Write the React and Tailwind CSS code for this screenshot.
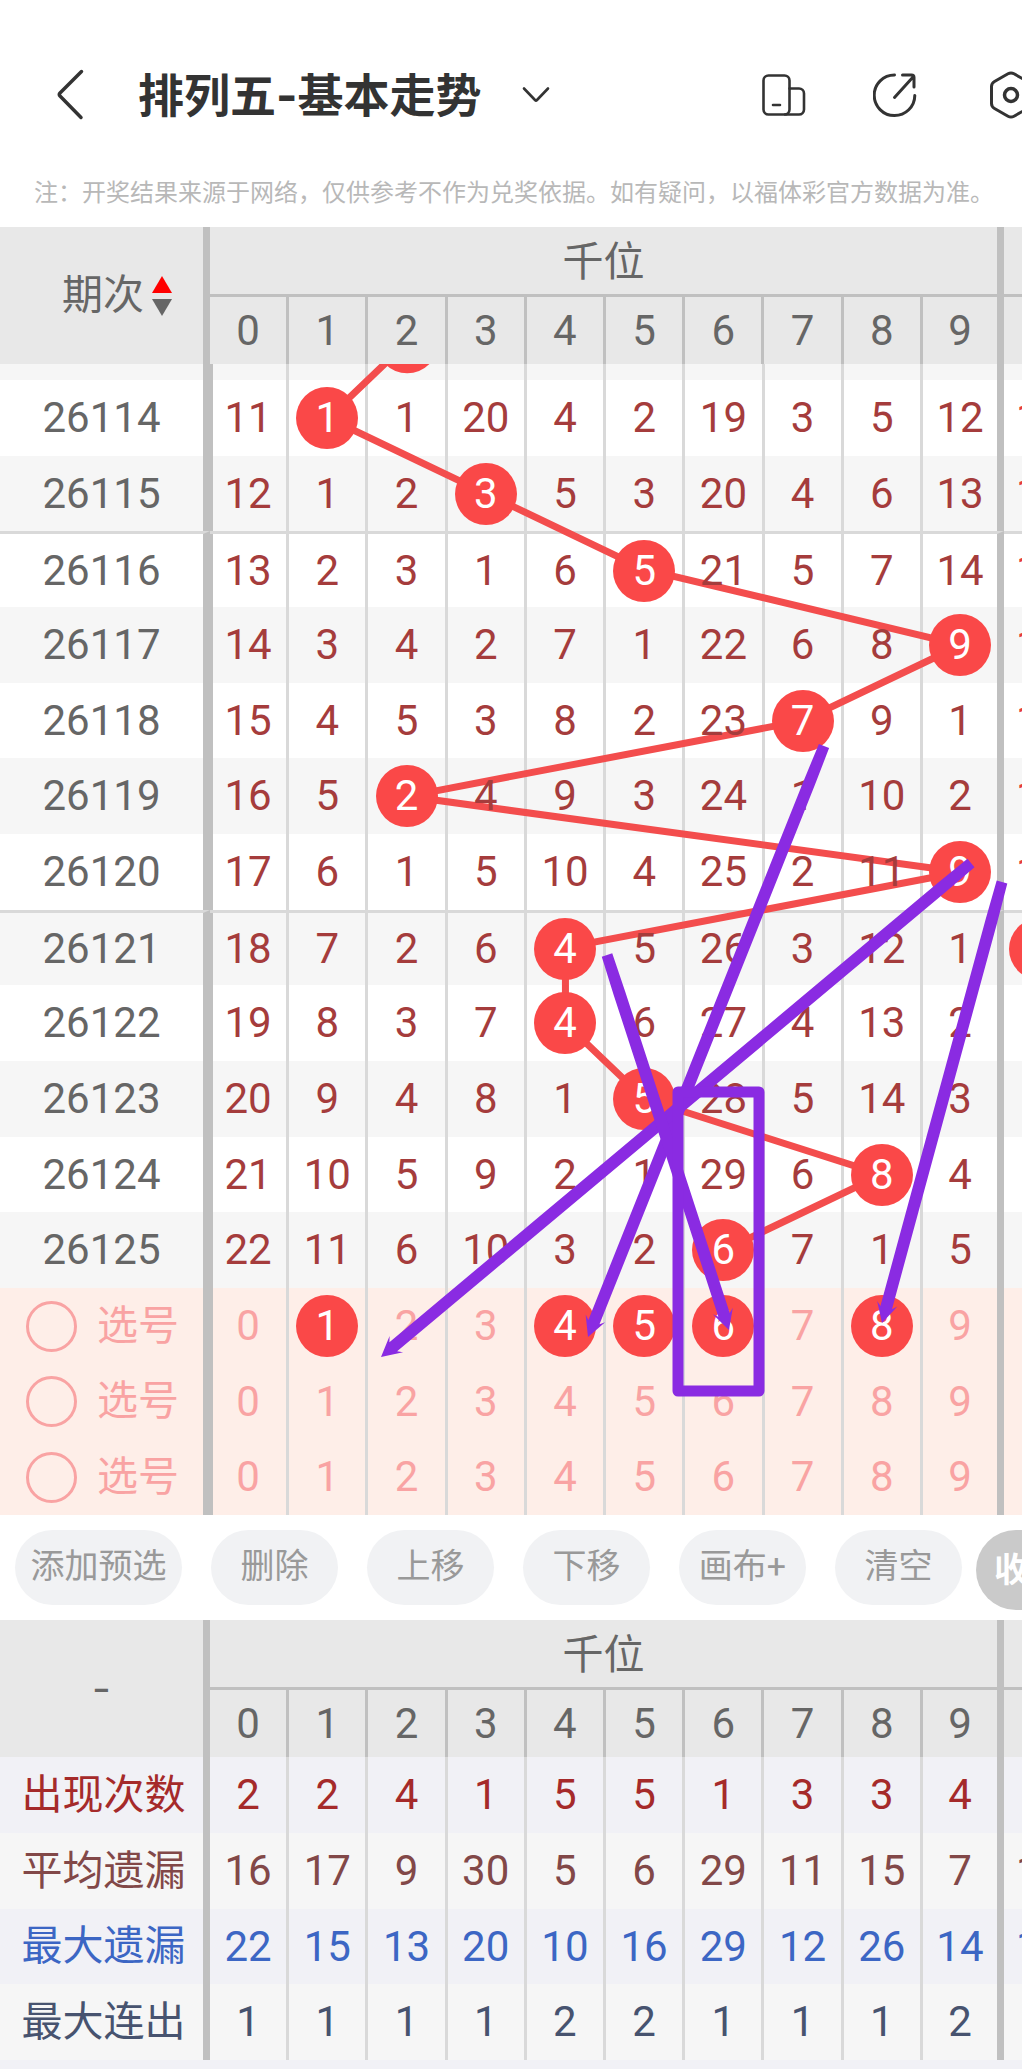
import { useState } from 'react';

const DIGITS = [0, 1, 2, 3, 4, 5, 6, 7, 8, 9];

const DRAWS = [
  { issue: '26114', hit: 1, cells: [11, 1, 1, 20, 4, 2, 19, 3, 5, 12], next: '1' },
  { issue: '26115', hit: 3, cells: [12, 1, 2, 3, 5, 3, 20, 4, 6, 13], next: '1' },
  { issue: '26116', hit: 5, cells: [13, 2, 3, 1, 6, 5, 21, 5, 7, 14], next: '1', divider: true },
  { issue: '26117', hit: 9, cells: [14, 3, 4, 2, 7, 1, 22, 6, 8, 9], next: '1' },
  { issue: '26118', hit: 7, cells: [15, 4, 5, 3, 8, 2, 23, 7, 9, 1], next: '1' },
  { issue: '26119', hit: 2, cells: [16, 5, 2, 4, 9, 3, 24, 1, 10, 2], next: '1' },
  { issue: '26120', hit: 9, cells: [17, 6, 1, 5, 10, 4, 25, 2, 11, 9], next: '1' },
  { issue: '26121', hit: 4, cells: [18, 7, 2, 6, 4, 5, 26, 3, 12, 1], nextHit: true, divider: true },
  { issue: '26122', hit: 4, cells: [19, 8, 3, 7, 4, 6, 27, 4, 13, 2] },
  { issue: '26123', hit: 5, cells: [20, 9, 4, 8, 1, 5, 28, 5, 14, 3] },
  { issue: '26124', hit: 8, cells: [21, 10, 5, 9, 2, 1, 29, 6, 8, 4] },
  { issue: '26125', hit: 6, cells: [22, 11, 6, 10, 3, 2, 6, 7, 1, 5] },
];

const STATS = [
  { label: '出现次数', cells: [2, 2, 4, 1, 5, 5, 1, 3, 3, 4], color: 'text-[#a52a2a]', bg: 'bg-[#f1f1f6]' },
  { label: '平均遗漏', cells: [16, 17, 9, 30, 5, 6, 29, 11, 15, 7], color: 'text-[#824848]', bg: 'bg-[#f6f6f6]', next: '1' },
  { label: '最大遗漏', cells: [22, 15, 13, 20, 10, 16, 29, 12, 26, 14], color: 'text-[#3c66c4]', bg: 'bg-[#f1f1f6]', next: '1' },
  { label: '最大连出', cells: [1, 1, 1, 1, 2, 2, 1, 1, 1, 2], color: 'text-[#47536f]', bg: 'bg-[#f6f6f6]' },
];

const ACTIONS = ['删除', '上移', '下移', '画布+', '清空'];

// board units: the drawing layers share the size of the trend table
const BOARD_W = 1022;
const BOARD_H = 1151;
const ballX = (n) => 249 + (n * 712) / 9;
const ballY = (row) => 54 + (row * 227) / 3;

const ARROWS = [
  { from: [824, 382], to: [588, 973] },
  { from: [971, 499], to: [381, 993] },
  { from: [607, 591], to: [729, 966] },
  { from: [1002, 518], to: [882, 959] },
];

function Columns() {
  return (
    <colgroup>
      <col className="w-[210px]" />
      {DIGITS.slice(0, 9).map((n) => (
        <col key={n} />
      ))}
      <col className="w-[81px]" />
      <col className="w-[18px]" />
    </colgroup>
  );
}

function TableHead({ children }) {
  return (
    <thead className="bg-[#e8e8e8] text-[#666]">
      <tr className="h-[70px]">
        <th rowSpan={2} className="border-r-[7px] border-[#c0c0c0] p-0 font-normal">
          {children}
        </th>
        <th colSpan={10} className="border-r-[7px] border-b-[3px] border-[#c0c0c0] p-0 pt-1 font-normal">
          千位
        </th>
        <th className="border-b-[3px] border-[#c0c0c0] p-0" />
      </tr>
      <tr className="h-[67px]">
        {DIGITS.map((n) => (
          <th
            key={n}
            className="border-r-[3px] border-[#c0c0c0] p-0 text-[42px] leading-none font-normal nth-[10]:border-r-[7px]"
          >
            {n}
          </th>
        ))}
        <th className="p-0" />
      </tr>
    </thead>
  );
}

const labelCell = 'border-r-[7px] border-r-[#c0c0c0] p-0 font-normal';
const numberCell =
  'border-r-[3px] border-r-[#d9d9d9] p-0 text-center text-[42px] leading-none nth-[11]:border-r-[7px] nth-[11]:border-r-[#c0c0c0]';
// the scrolling body has a slightly thicker rule next to the issue column
const bodyCell = numberCell + ' nth-[2]:shadow-[inset_3px_0_#c0c0c0]';
const ball =
  'relative z-20 mx-auto flex size-[62px] items-center justify-center rounded-full bg-[#fa4848] text-white';

function TrendLines() {
  const points = DRAWS.map((d, i) => `${ballX(d.hit)},${ballY(i)}`);
  points.unshift(`${ballX(2)},${ballY(-1)}`);
  return (
    <svg
      className="pointer-events-none absolute inset-0 z-10 h-full w-full"
      viewBox={`0 0 ${BOARD_W} ${BOARD_H}`}
      preserveAspectRatio="none"
    >
      <polyline points={points.join(' ')} fill="none" stroke="#f34d4d" strokeWidth="7" />
      <circle cx={ballX(2)} cy={ballY(-1)} r="31" fill="#fa4848" />
    </svg>
  );
}

function Arrow({ from, to }) {
  const [x1, y1] = from;
  const [x2, y2] = to;
  const len = Math.hypot(x2 - x1, y2 - y1);
  const angle = (Math.atan2(y2 - y1, x2 - x1) * 180) / Math.PI;
  return (
    <g transform={`translate(${x1} ${y1}) rotate(${angle})`}>
      <path d={`M0 -5.5L40 -6H${len - 16}L${len - 20} -10.5L${len} 0L${len - 20} 10.5L${len - 16} 6H40L0 5.5z`} />
    </g>
  );
}

function Sketch() {
  return (
    <svg
      className="pointer-events-none absolute inset-0 z-30 h-full w-full"
      viewBox={`0 0 ${BOARD_W} ${BOARD_H}`}
      preserveAspectRatio="none"
      fill="#8a2be2"
    >
      {ARROWS.map((a) => (
        <Arrow key={a.from[0]} from={a.from} to={a.to} />
      ))}
      <rect x="678" y="728" width="81" height="299" fill="none" stroke="#8a2be2" strokeWidth="11" strokeLinejoin="round" />
    </svg>
  );
}

function Header() {
  return (
    <header className="overflow-hidden bg-white pt-[59px] pb-4 text-[#333]">
      <div className="flex h-[72px] items-center">
        <button aria-label="返回" className="ml-[46px] shrink-0">
          <svg width="48" height="60" fill="none" stroke="currentColor" strokeWidth="3.5" strokeLinecap="round" strokeLinejoin="round">
            <path d="M35.5 6.5L14 28q-1.500 1.500 0 3L35 52.500" />
          </svg>
        </button>
        <h1 className="ml-[44px] font-[Inter,'Noto_Sans_CJK_SC',sans-serif] text-[46px] leading-none font-bold whitespace-nowrap">
          排列五-基本走势
        </h1>
        <button aria-label="切换走势" className="ml-[38px] shrink-0">
          <svg width="32" height="24" fill="none" stroke="currentColor" strokeWidth="2.6" strokeLinecap="round" strokeLinejoin="round">
            <path d="M4 5.500L15 17q1 1 2 0L28 5.500" />
          </svg>
        </button>
        <div className="-mr-[13px] ml-auto flex shrink-0 gap-[66px]">
          <button aria-label="横屏">
            <svg width="48" height="48" fill="none" stroke="currentColor" strokeWidth="2.6" strokeLinecap="round">
              <rect x="4.500" y="4.500" width="26" height="39" rx="5" />
              <path d="M30.500 17.500H40a5 5 0 0 1 5 5V38.500a5 5 0 0 1-5 5H26M14 34h7" />
            </svg>
          </button>
          <button aria-label="分享">
            <svg width="48" height="48" fill="none" stroke="currentColor" strokeWidth="3" strokeLinecap="round" strokeLinejoin="round">
              <path d="M21.500 4A20.300 20.300 0 1 0 41.800 24.500" />
              <path d="M21.500 26.500L40.500 5.500M29.500 4H38.500q2.500 0 2.500 2.500V16" />
            </svg>
          </button>
          <button aria-label="设置">
            <svg width="48" height="48" fill="none" stroke="currentColor" strokeWidth="3" strokeLinejoin="round">
              <path d="M21 2.800q3-1.800 6 0L40.500 10.500q3 1.800 3 5V32.500q0 3.200-3 5L27 45.200q-3 1.800-6 0L7.500 37.500q-3-1.800-3-5V15.500q0-3.200 3-5z" />
              <circle cx="24" cy="24" r="6.500" strokeWidth="3.500" />
            </svg>
          </button>
        </div>
      </div>
      <p className="mt-11 pl-[34px] text-2xl leading-9 whitespace-nowrap text-[#b8b8b8]">
        注：开奖结果来源于网络，仅供参考不作为兑奖依据。如有疑问，以福体彩官方数据为准。
      </p>
    </header>
  );
}

function App() {
  const [picks, setPicks] = useState([[1, 4, 5, 6, 8], [], []]);
  const [activePick, setActivePick] = useState(null);

  const togglePick = (row, n) =>
    setPicks(
      picks.map((p, i) => {
        if (i !== row) return p;
        return p.includes(n) ? p.filter((v) => v !== n) : [...p, n];
      })
    );

  return (
    <div className="overflow-x-hidden bg-white font-[Roboto,'Noto_Sans_CJK_SC',sans-serif] text-[41px] leading-none">
      <Header />

      <table className="w-full table-fixed border-separate border-spacing-0">
        <Columns />
        <TableHead>
          <button className="flex w-full items-center gap-2 pl-[62px]">
            期次
            <svg width="20" height="42" className="shrink-0">
              <path d="M10 1L20 18H0z" fill="#f00" />
              <path d="M0 24H20L10 41z" fill="#666" />
            </svg>
          </button>
        </TableHead>
      </table>

      <div className="relative overflow-hidden">
        <table className="w-full table-fixed border-separate border-spacing-0">
          <Columns />
          <tbody className="[&>tr]:h-[76px] [&>tr:first-child]:h-4 [&>tr:nth-child(3n)]:h-[75px]">
            <tr className="bg-[#f6f6f6]">
              <td className={labelCell} />
              {DIGITS.map((n) => (
                <td key={n} className={bodyCell} />
              ))}
              <td className="p-0" />
            </tr>
            {DRAWS.map((d, i) => {
              const line = d.divider ? ' border-t-[3px] border-t-[#d9d9d9]' : '';
              return (
                <tr key={d.issue} className={i % 2 ? 'bg-[#f6f6f6]' : 'bg-white'}>
                  <th className={labelCell + line + ' text-[42px] leading-none text-[#666]'}>{d.issue}</th>
                  {d.cells.map((v, n) => (
                    <td key={n} className={bodyCell + line + ' text-[#a53c3c]'}>
                      <span className={n === d.hit ? ball : 'relative z-20'}>{v}</span>
                    </td>
                  ))}
                  <td className={'p-0 text-[#e53c3c]' + line}>
                    {d.nextHit && <div className="ml-[5px] h-[62px] w-[62px] rounded-full bg-[#fa4848]" />}
                    {d.next && <div className="pl-3">{d.next}</div>}
                  </td>
                </tr>
              );
            })}
            {picks.map((picked, row) => (
              <tr key={row} className="bg-[#feeee8] text-[#f9a3a3]">
                <th className={labelCell}>
                  <label className="flex items-center gap-5 pl-[26px]">
                    <input
                      type="radio"
                      name="pick"
                      checked={activePick === row}
                      onChange={() => setActivePick(row)}
                      className="size-[51px] shrink-0 appearance-none rounded-full border-[3px] border-[#f9a3a3] checked:bg-[#f9a3a3]"
                    />
                    选号
                  </label>
                </th>
                {DIGITS.map((n) => (
                  <td key={n} className={bodyCell}>
                    <button
                      onClick={() => togglePick(row, n)}
                      className={picked.includes(n) ? ball : 'relative z-20'}
                    >
                      {n}
                    </button>
                  </td>
                ))}
                <td className="p-0" />
              </tr>
            ))}
          </tbody>
        </table>
        <TrendLines />
        <Sketch />
      </div>

      <div className="flex h-[105px] items-start overflow-hidden bg-white pt-[15px] pl-[15px] text-[34px] text-[#999]">
        <div className="flex shrink-0 gap-[29px]">
          <button className="h-[75px] w-[167px] rounded-full bg-[#f1f2f4] pb-1">添加预选</button>
          {ACTIONS.map((name) => (
            <button key={name} className="h-[75px] w-[127px] rounded-full bg-[#f1f2f4] pb-1">
              {name}
            </button>
          ))}
        </div>
        <button className="ml-[14px] h-20 shrink-0 rounded-full bg-[#cacaca] px-[18px] font-bold text-white">收起</button>
      </div>

      <table className="w-full table-fixed border-separate border-spacing-0">
        <Columns />
        <TableHead>
          <span className="font-[Inter,sans-serif]">-</span>
        </TableHead>
        <tbody className="[&>tr]:h-[76px] [&>tr:nth-child(3)]:h-[75px]">
          {STATS.map((s) => (
            <tr key={s.label} className={`${s.bg} ${s.color}`}>
              <th className={labelCell + ' pl-1'}>{s.label}</th>
              {s.cells.map((v, n) => (
                <td key={n} className={numberCell}>
                  {v}
                </td>
              ))}
              <td className="p-0 pl-3">{s.next}</td>
            </tr>
          ))}
        </tbody>
      </table>
      <div className="h-[9px] bg-[#f1f1f6]" />
    </div>
  );
}

export default App;
